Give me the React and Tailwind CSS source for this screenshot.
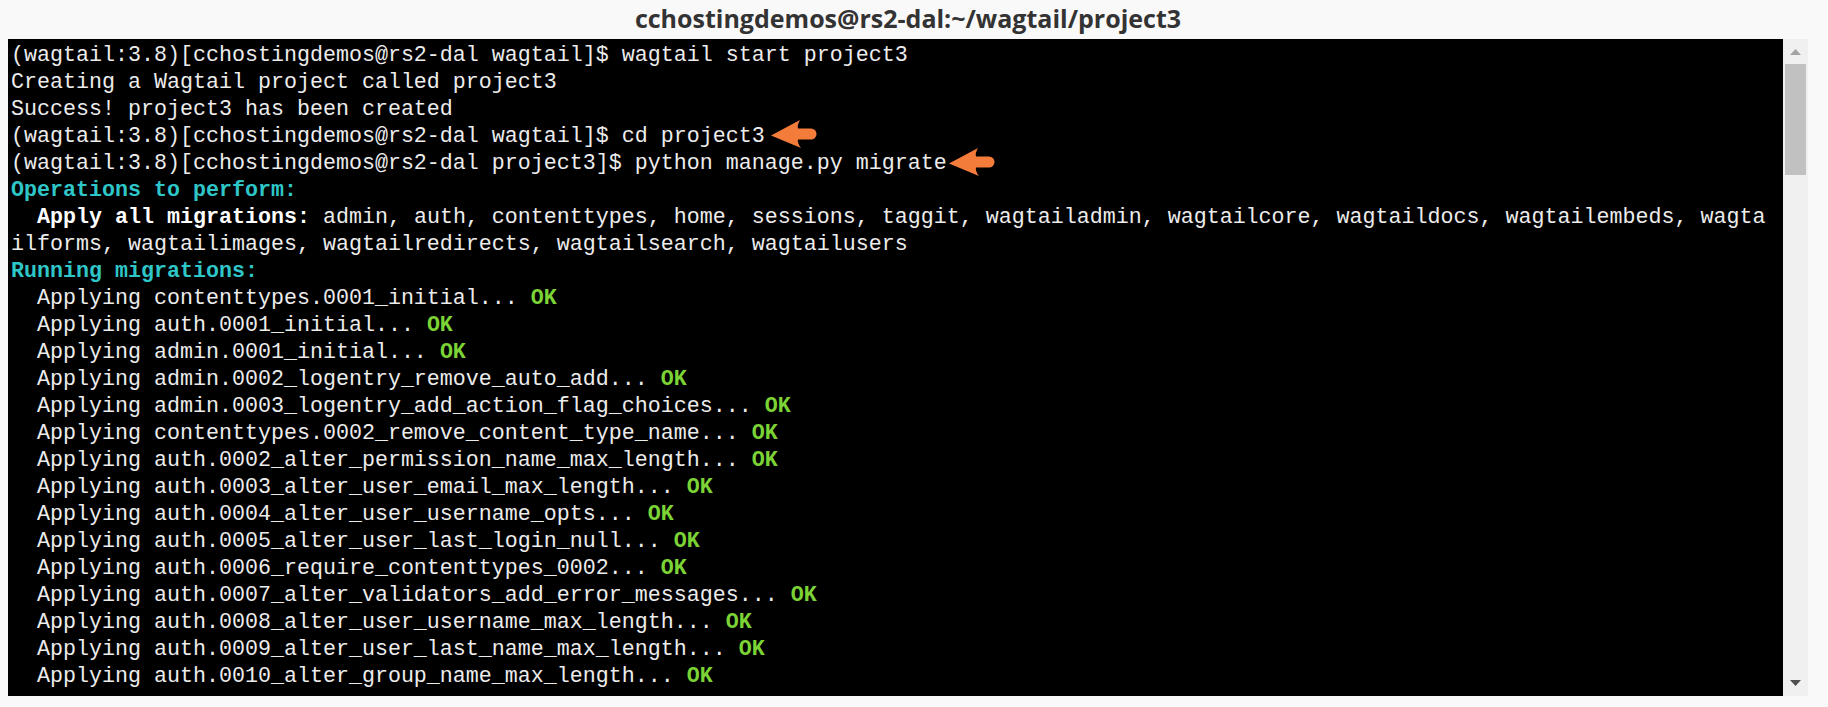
import React from "react";

const migrations = [
  "contenttypes.0001_initial",
  "auth.0001_initial",
  "admin.0001_initial",
  "admin.0002_logentry_remove_auto_add",
  "admin.0003_logentry_add_action_flag_choices",
  "contenttypes.0002_remove_content_type_name",
  "auth.0002_alter_permission_name_max_length",
  "auth.0003_alter_user_email_max_length",
  "auth.0004_alter_user_username_opts",
  "auth.0005_alter_user_last_login_null",
  "auth.0006_require_contenttypes_0002",
  "auth.0007_alter_validators_add_error_messages",
  "auth.0008_alter_user_username_max_length",
  "auth.0009_alter_user_last_name_max_length",
  "auth.0010_alter_group_name_max_length",
];

function OrangeArrow({ className }) {
  return (
    <svg
      className={className}
      width="46"
      height="28"
      viewBox="0 0 46 28"
      fill="#f47c3a"
    >
      <path d="M0 15.5 L29 0 Q26 5 27 8.5 L40 8.5 A5.5 5.5 0 0 1 40 19.5 L27 19.5 Q26 23 30 28 Z" />
    </svg>
  );
}

function Line({ children }) {
  return <div className="h-[27px] whitespace-pre">{children}</div>;
}

export default function App() {
  return (
    <div className="w-[1828px] h-[707px] bg-[#f9f9f9] flex flex-col overflow-hidden">
      <div className="h-[39px] flex items-center justify-center pl-[8px] pr-[20px] pb-[2px]">
        <span className="font-['Open_Sans',sans-serif] font-bold text-[25px] text-[#333333] leading-none">
          cchostingdemos@rs2-dal:~/wagtail/project3
        </span>
      </div>
      <div className="flex ml-[8px] w-[1800px] h-[657px]">
        <div className="flex-1 bg-black pl-[3px] pt-[3px] font-['Liberation_Mono','Courier_New',monospace] text-[21.66px] leading-[27px] text-[#ececec] overflow-hidden">
          <Line>(wagtail:3.8)[cchostingdemos@rs2-dal wagtail]$ wagtail start project3</Line>
          <Line>Creating a Wagtail project called project3</Line>
          <Line>Success! project3 has been created</Line>
          <Line>
            (wagtail:3.8)[cchostingdemos@rs2-dal wagtail]$ cd project3
            <span className="relative">
              <OrangeArrow className="absolute left-[6px] top-[-4px]" />
            </span>
          </Line>
          <Line>
            (wagtail:3.8)[cchostingdemos@rs2-dal project3]$ python manage.py migrate
            <span className="relative">
              <OrangeArrow className="absolute left-[2px] top-[-3px]" />
            </span>
          </Line>
          <Line>
            <span className="font-bold text-[#2fc6c8]">Operations to perform:</span>
          </Line>
          <Line>
            {"  "}
            <span className="font-bold text-white">Apply all migrations:</span>
            {" admin, auth, contenttypes, home, sessions, taggit, wagtailadmin, wagtailcore, wagtaildocs, wagtailembeds, wagta"}
          </Line>
          <Line>ilforms, wagtailimages, wagtailredirects, wagtailsearch, wagtailusers</Line>
          <Line>
            <span className="font-bold text-[#2fc6c8]">Running migrations:</span>
          </Line>
          {migrations.map((m) => (
            <Line key={m}>
              {"  Applying " + m + "... "}
              <span className="font-bold text-[#7bd335]">OK</span>
            </Line>
          ))}
        </div>
        <div className="w-[25px] bg-[#f0f0f0] flex flex-col">
          <div className="h-[25px] flex items-center justify-center">
            <svg width="11" height="6" viewBox="0 0 11 6">
              <path d="M5.5 0 L11 6 L0 6 Z" fill="#a3a3a3" />
            </svg>
          </div>
          <div className="h-[111px] mx-[2px] bg-[#c1c1c1]" />
          <div className="flex-1" />
          <div className="h-[26px] flex items-center justify-center">
            <svg width="11" height="6" viewBox="0 0 11 6">
              <path d="M0 0 L11 0 L5.5 6 Z" fill="#505050" />
            </svg>
          </div>
        </div>
      </div>
    </div>
  );
}
